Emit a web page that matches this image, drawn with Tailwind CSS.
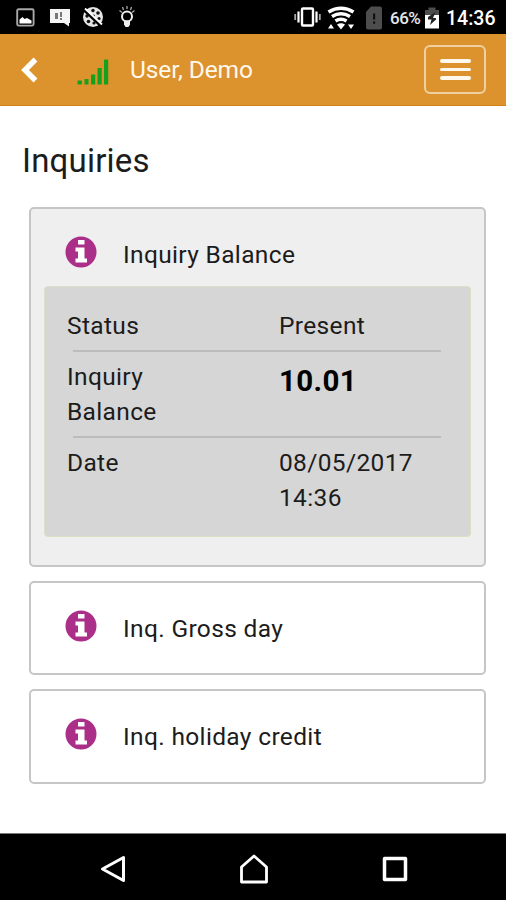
<!DOCTYPE html>
<html lang="en">
<head>
    <meta charset="UTF-8">
    <meta name="viewport" content="width=device-width, initial-scale=1.0">
    <title>Inquiries</title>
    <script src="https://cdn.jsdelivr.net/npm/@tailwindcss/browser@4"></script>
</head>
<body class="bg-white text-[#1c1c1c] h-[900px] flex flex-col overflow-hidden font-['Roboto',sans-serif] text-[24.5px] leading-[35px] tracking-[0.35px]">
    <!-- Android status bar -->
    <div class="h-[34px] shrink-0 bg-black flex items-center justify-between pl-4 pr-[11px]">
        <div class="flex items-center">
            <svg class="w-[19px] h-[19px]" viewBox="0 0 19 19">
                <rect x="1.2" y="1.2" width="16.4" height="16.4" rx="1.5" fill="none" stroke="#a8a8a8" stroke-width="1.9"/>
                <path d="M3.5 15.500v-4l3-2.500 2 2 2.500-1 4.500 2.500v3z" fill="#fff"/>
            </svg>
            <svg class="w-[22px] h-[19px] ml-[14px]" viewBox="0 0 22 19">
                <path d="M1 1h20v14h-1v3.500L15 15H1z" fill="#f4f4f4"/>
                <path d="M6 5h3v6H6zM11 4h2v5h-2zM11 10h2v2h-2z" fill="#777"/>
            </svg>
            <svg class="w-[22px] h-[22px] ml-[11px]" viewBox="0 0 22 22">
                <circle cx="11" cy="11" r="10" fill="#e6e6e6"/>
                <g fill="#111">
                    <circle cx="11" cy="4.500" r="1.700"/><circle cx="16" cy="7" r="1.800"/><circle cx="17" cy="12.500" r="1.600"/>
                    <circle cx="5" cy="10" r="1.700"/><circle cx="6.500" cy="15.500" r="1.800"/><circle cx="12" cy="17" r="1.600"/><circle cx="11.500" cy="10" r="1.500"/>
                </g>
                <path d="M2 4l17 16" stroke="#000" stroke-width="3"/>
                <path d="M3 2.500l17 16" stroke="#fff" stroke-width="1.800"/>
            </svg>
            <svg class="w-[16px] h-[22px] ml-[15px]" viewBox="0 0 16 22" fill="none" stroke="#eee">
                <circle cx="8" cy="10.500" r="5" stroke-width="2"/>
                <path d="M8 0v3M3.500 1l1 3M12.500 1l-1 3M0.500 4.500l2.500 2M15.500 4.500l-2.500 2" stroke="#aaa" stroke-width="1.300"/>
                <path d="M5 14.500h6v4l-1.500 2.500h-3L5 18.500z" fill="#eee" stroke="none"/>
            </svg>
        </div>
        <div class="flex items-center text-white tracking-normal">
            <svg class="w-[27px] h-[20px]" viewBox="0 0 27 20" fill="none" stroke="#fff">
                <rect x="8" y="1.500" width="11" height="17" rx="1" stroke-width="2.400"/>
                <path d="M4.500 4.500v11M22.500 4.500v11" stroke-width="2.200"/>
                <path d="M1.200 7v6M25.800 7v6" stroke="#aaa" stroke-width="1.800"/>
            </svg>
            <svg class="w-[28px] h-[24px] ml-[6px] mt-[2px]" viewBox="0 0 28 24">
                <g fill="none" stroke="#fff" stroke-width="3.600">
                    <path d="M1.500 6q12.500-7.500 25 0"/>
                    <path d="M5 10.500q9-5.500 18 0"/>
                    <path d="M8.500 15q5.500-3.500 11 0"/>
                </g>
                <path d="M10 18.500q4-2.500 8 0L14 23.500z" fill="#fff"/>
                <path d="M1 22.500l3-4.500 3 4.500zM21 18.500h6l-3 4.500z" fill="#fff"/>
            </svg>
            <svg class="w-[18px] h-[24px] ml-[10px] mt-[2px]" viewBox="0 0 18 24">
                <path d="M6 0.500h9q2 0 2 2v19q0 2-2 2H3q-2 0-2-2V6z" fill="#4d4d4d"/>
                <path d="M8 7.500h2.200v6H8zM8 15.500h2.200v2.200H8z" fill="#111"/>
            </svg>
            <span class="text-[17px] leading-none ml-[7px] mt-[3px] w-[32px] whitespace-nowrap font-medium text-gray-200 tracking-[-0.5px]">66%</span>
            <svg class="w-[16px] h-[22px] ml-[2px] mt-[1px]" viewBox="0 0 16 22">
                <path d="M1 3h3.500V0.500h7V3H15v8H1z" fill="#4d4d4d"/>
                <path d="M1 8h14v13.500H1z" fill="#fff"/>
                <path d="M11.500 5L4 10v2.500h3.500L6 18l6-5.500V11H9z" fill="#222"/>
            </svg>
            <span class="text-[19.500px] leading-none ml-[6px] mt-[3px] w-[49px] whitespace-nowrap font-medium">14:36</span>
        </div>
    </div>

    <!-- App header -->
    <header class="h-[72px] shrink-0 bg-[#dc922d] border-b border-[#cf7f14] flex items-center pl-[21px] pr-[20px]">
        <svg class="w-[17px] h-[26px]" viewBox="0 0 17 26" fill="none" stroke="#fff" stroke-width="5.500">
            <path d="M14.500 2.500L4 13l10.500 10.500"/>
        </svg>
        <svg class="w-[32px] h-[26px] ml-[39px] mt-[5px]" viewBox="0 0 32 26" fill="#16a01c">
            <rect x="0.500" y="21.500" width="4.500" height="4" rx="0.800"/>
            <rect x="7.500" y="20" width="4" height="5.500" rx="0.500"/>
            <rect x="14" y="15.500" width="4.200" height="10" rx="0.500"/>
            <rect x="20.500" y="9" width="4.200" height="16.500" rx="0.500"/>
            <rect x="27" y="0.500" width="4.200" height="25" rx="0.500"/>
        </svg>
        <span class="ml-[21px] text-[#fff8ec] tracking-[-0.1px]">User, Demo</span>
        <button class="ml-auto w-[62px] h-[49px] rounded-[6px] border-2 border-[#efd0a2] flex flex-col items-center justify-center gap-[5px]">
            <span class="w-[31px] h-[3.500px] rounded-sm bg-[#fff8ec]"></span>
            <span class="w-[31px] h-[3.500px] rounded-sm bg-[#fff8ec]"></span>
            <span class="w-[31px] h-[3.500px] rounded-sm bg-[#fff8ec]"></span>
        </button>
    </header>

    <!-- Content -->
    <main class="grow pt-[35px] pl-[29px] pr-[20px]">
        <h1 class="-ml-[7px] h-[66px] text-[33px] leading-[39px] tracking-[0.2px]">Inquiries</h1>

        <div class="h-[360px] bg-[#efefef] border-2 border-[#c6c6c6] rounded-[5px] px-[13px]">
            <div class="h-[77px] pl-[21px] pt-[27px] flex items-start">
                <svg class="w-[32px] h-[32px]" viewBox="0 0 32 32">
                    <circle cx="16" cy="16" r="15.500" fill="#ab2e89"/>
                    <path d="M13 4h6.500v4.500H13zM10.500 11.500h9v11h2.500v4H10.500v-4H13V15.500h-2.500z" fill="#fff"/>
                </svg>
                <span class="ml-[26px] mt-[1px]">Inquiry Balance</span>
            </div>
            <div class="h-[251px] bg-[#d6d6d6] border border-[#dbe0c4] rounded-[4px] pl-[22px] pr-[29px] pt-[21px]">
                <div class="flex">
                    <div class="w-[212px]">Status</div>
                    <div>Present</div>
                </div>
                <hr class="my-[7px] ml-[6px] border-t-2 border-[#bcbcbc]">
                <div class="flex">
                    <div class="w-[212px]">Inquiry<br>Balance</div>
                    <div class="font-bold text-[29.500px] leading-[44px] text-black">10.01</div>
                </div>
                <hr class="my-[7px] ml-[6px] border-t-2 border-[#bcbcbc]">
                <div class="flex">
                    <div class="w-[212px]">Date</div>
                    <div>08/05/2017<br>14:36</div>
                </div>
            </div>
        </div>

        <div class="mt-[14px] h-[94px] border-2 border-[#c6c6c6] rounded-[5px] pl-[34px] pt-[27px] flex items-start">
            <svg class="w-[32px] h-[32px]" viewBox="0 0 32 32">
                <circle cx="16" cy="16" r="15.500" fill="#ab2e89"/>
                <path d="M13 4h6.500v4.500H13zM10.500 11.500h9v11h2.500v4H10.500v-4H13V15.500h-2.500z" fill="#fff"/>
            </svg>
            <span class="ml-[26px] mt-[1px]">Inq. Gross day</span>
        </div>

        <div class="mt-[14px] h-[95px] border-2 border-[#c6c6c6] rounded-[5px] pl-[34px] pt-[27px] flex items-start">
            <svg class="w-[32px] h-[32px]" viewBox="0 0 32 32">
                <circle cx="16" cy="16" r="15.500" fill="#ab2e89"/>
                <path d="M13 4h6.500v4.500H13zM10.500 11.500h9v11h2.500v4H10.500v-4H13V15.500h-2.500z" fill="#fff"/>
            </svg>
            <span class="ml-[26px] mt-[1px]">Inq. holiday credit</span>
        </div>
    </main>

    <!-- Android navigation bar -->
    <nav class="h-[67px] shrink-0 bg-black border-t border-[#777] flex items-center justify-between pl-[100px] pr-[98px] pt-[4px]">
        <svg class="w-[26px] h-[28px]" viewBox="0 0 26 28" fill="none" stroke="#fff" stroke-width="3" stroke-linejoin="round">
            <path d="M23.500 2.500v23L2.500 14z"/>
        </svg>
        <svg class="w-[30px] h-[30px]" viewBox="0 0 30 30" fill="none" stroke="#fff" stroke-width="2.800" stroke-linejoin="round">
            <path d="M2.500 28V13L15 2l12.500 11v15z"/>
        </svg>
        <svg class="w-[26px] h-[26px]" viewBox="0 0 26 26" fill="none" stroke="#fff" stroke-width="3.500" stroke-linejoin="round">
            <path d="M2.500 2.500h21v21h-21z"/>
        </svg>
    </nav>
</body>
</html>
